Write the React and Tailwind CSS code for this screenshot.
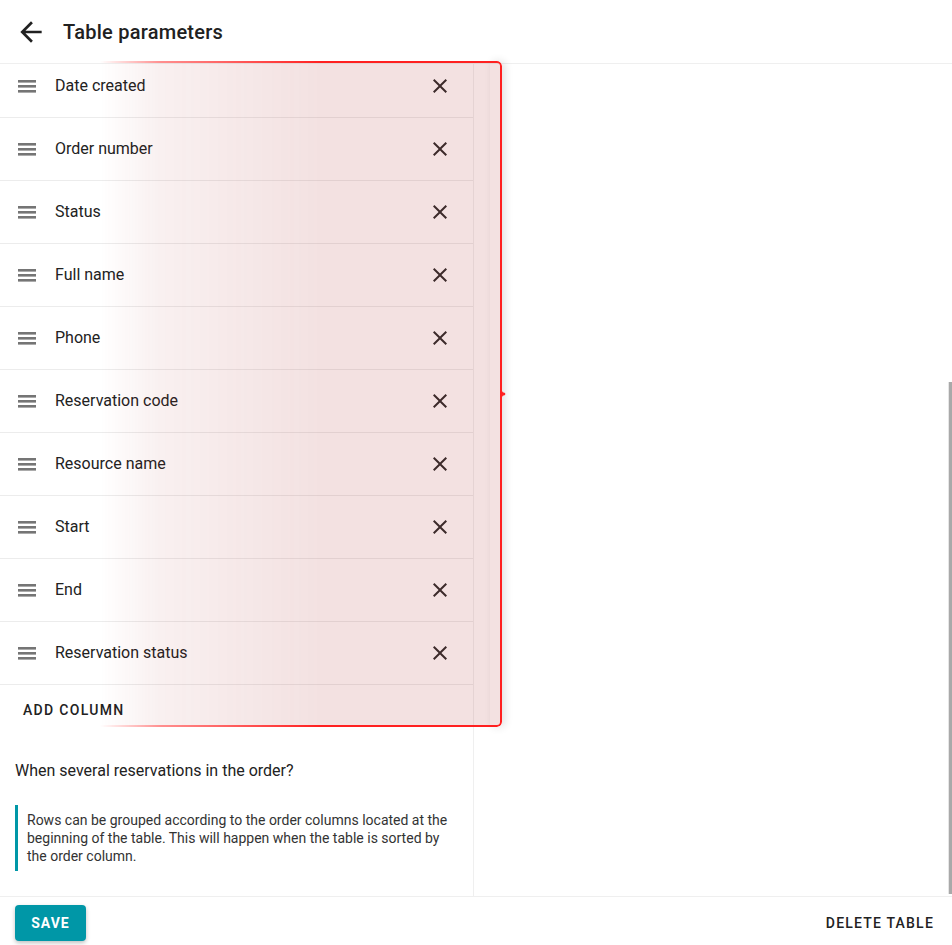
import React from "react";

const columns = [
  "Date created",
  "Order number",
  "Status",
  "Full name",
  "Phone",
  "Reservation code",
  "Resource name",
  "Start",
  "End",
  "Reservation status",
];

const BackArrow = () => (
  <svg width="32" height="32" viewBox="0 0 24 24" fill="#212121">
    <path d="M20 11H7.83l5.59-5.59L12 4l-8 8 8 8 1.41-1.41L7.83 13H20v-2z" />
  </svg>
);

const Handle = () => (
  <svg width="18" height="13" viewBox="0 0 18 13" fill="#757575">
    <rect x="0" y="0" width="18" height="2.6" />
    <rect x="0" y="5" width="18" height="2.6" />
    <rect x="0" y="10" width="18" height="2.6" />
  </svg>
);

const Close = () => (
  <svg width="24" height="24" viewBox="0 0 24 24" fill="#2b2b2b">
    <path d="M19 6.41L17.59 5 12 10.59 6.41 5 5 6.41 10.59 12 5 17.59 6.41 19 12 13.41 17.59 19 19 17.59 13.41 12z" />
  </svg>
);

const ColumnRow = ({ label }) => (
  <div className="flex h-[63px] items-center border-b border-[#ececec] pl-[18px] pr-[21px]">
    <Handle />
    <span className="ml-[19px] flex-1 text-[16px] text-[#222]">{label}</span>
    <Close />
  </div>
);

const Highlight = () => (
  <div className="pointer-events-none absolute left-[100px] top-[61px] h-[666px] w-[402px]">
    <div className="absolute inset-y-0 right-0 w-[12px] rounded-r-[5px] shadow-[3px_0_8px_rgba(0,0,0,0.12)]" />
    <div className="absolute inset-0 rounded-r-[5px] border-y-2 border-r-2 border-[#ff2020] bg-[rgba(170,40,40,0.14)] [mask-image:linear-gradient(to_right,transparent,rgba(0,0,0,0.5)_15%,black_55%)]" />
    <svg
      className="absolute top-[323px] left-[399px]"
      width="10"
      height="20"
      viewBox="0 0 10 20"
    >
      <path d="M2 0 V7 C2 9 3 9.5 6 10 C3 10.5 2 11 2 13 V20" fill="none" stroke="#ff2020" strokeWidth="2" />
    </svg>
  </div>
);

export default function App() {
  return (
    <div className="relative flex h-[945px] w-[952px] flex-col overflow-hidden bg-white font-['Roboto',sans-serif] text-[#222]">
      <header className="flex h-[64px] shrink-0 items-center border-b border-[#efefef] pl-[15px]">
        <BackArrow />
        <h1 className="ml-[16px] text-[20px] font-medium tracking-[0.25px] text-[#212121]">Table parameters</h1>
      </header>

      <div className="flex min-h-0 flex-1">
        <div className="w-[474px] shrink-0 overflow-hidden border-r border-[#efefef]">
          <div className="-mt-[9px]">
            {columns.map((c) => (
              <ColumnRow key={c} label={c} />
            ))}
          </div>
          <div className="flex h-[50px] items-center pl-[15px]">
            <button className="h-[36px] px-[8px] text-[14px] font-medium uppercase tracking-[1.3px] text-[#222]">
              Add column
            </button>
          </div>
          <p className="mt-[24px] pl-[15px] text-[16px] text-[#222]">
            When several reservations in the order?
          </p>
          <div className="mx-[15px] mt-[22px] border-l-[3px] border-[#0097a7] py-[6px] pl-[9px] pr-[6px] text-[14px] leading-[18px] text-[#333]">
            Rows can be grouped according to the order columns located at the beginning of the table. This will happen when the table is sorted by the order column.
          </div>
        </div>
        <div className="flex flex-1 justify-end">
          <div className="mt-[318px] mb-[2px] w-[4px] border-l border-[#e6e6e6] bg-[#a9a9a9]" />
        </div>
      </div>

      <footer className="flex h-[49px] shrink-0 items-start justify-between border-t border-[#efefef] pl-[15px] pr-[10px] pt-[8px]">
        <button className="h-[36px] w-[71px] rounded-[4px] bg-[#0097a7] text-[14px] font-bold uppercase tracking-[1px] text-white shadow-[0_2px_4px_rgba(0,0,0,0.25)]">
          Save
        </button>
        <button className="h-[36px] px-[8px] text-[14px] font-medium uppercase tracking-[1.2px] text-[#222]">
          Delete table
        </button>
      </footer>

      <Highlight />
    </div>
  );
}
